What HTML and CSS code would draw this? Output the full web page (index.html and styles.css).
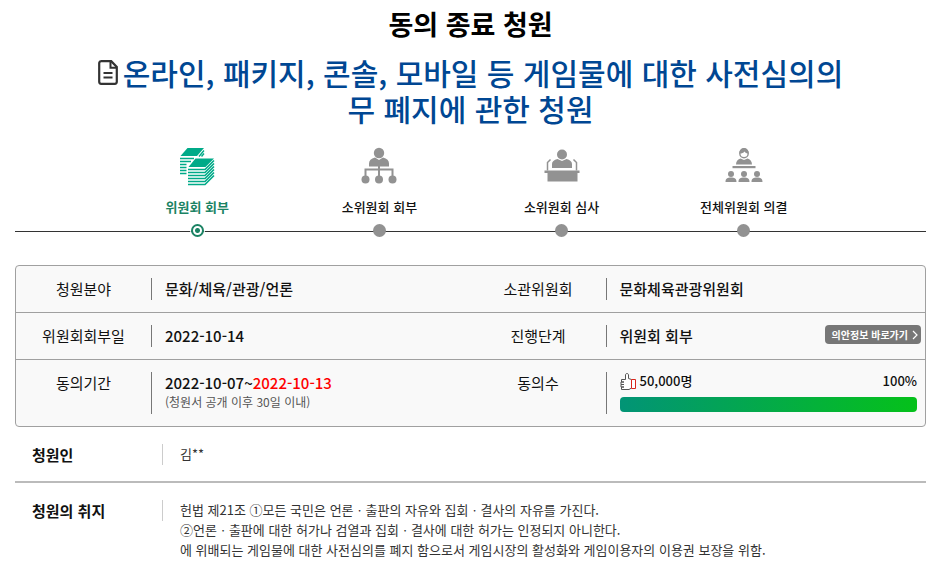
FILE: index.html
```html
<!DOCTYPE html>
<html lang="ko">
<head>
    <meta charset="UTF-8">
    <meta name="viewport" content="width=device-width, initial-scale=1.0">
    <title>동의 종료 청원</title>
    <link rel="stylesheet" href="styles.css">
</head>
<body>
    <main class="container">
        <h1>동의 종료 청원</h1>

        <h2 class="subject">
            <svg class="doc-icon" viewBox="0 0 20 25" aria-hidden="true">
                <path d="M3 1.2h10.2L18.8 7v14.8a2 2 0 0 1-2 2H3.2a2 2 0 0 1-2-2V3.2a2 2 0 0 1 2-2z" fill="#fff" stroke="#333" stroke-width="2.2"/>
                <path d="M12.5 1v6.8h6.3" fill="none" stroke="#333" stroke-width="2"/>
                <path d="M5.5 13h9M5.5 17.500h9" stroke="#333" stroke-width="2"/>
            </svg>온라인, 패키지, 콘솔, 모바일 등 게임물에 대한 사전심의의무 폐지에 관한 청원
        </h2>

        <!-- 진행 단계 -->
        <ol class="steps">
            <li class="active">
                <svg class="step-icon" viewBox="0 0 40 40" aria-hidden="true">
                    <path d="M10.5 2H27l-7 8H3.5z" fill="#0a8"/>
                    <path d="M3 12.5h14M3 15.5h11M3 18.5h6.5M3 21.5h6.5M3 24.5h6.5M3 27.5h6.5" stroke="#0a8" stroke-width="1.6"/>
                    <path d="M22 10.5l5-6M24.5 10.5l2.5-3" stroke="#0a8" stroke-width="1.4"/>
                    <path d="M18.5 12.5H37L28.5 21h-17z" fill="#0a8"/>
                    <path d="M11 23.5h17l9-9M11 26.5h17l9-9M11 29.5h17l9-9M11 32.5h17l9-9M11 35.5h17l9-9M11 38.5h17l9-9" fill="none" stroke="#0a8" stroke-width="1.6"/>
                </svg>
                <span class="step-name">위원회 회부</span>
                <span class="dot"></span>
            </li>
            <li>
                <svg class="step-icon" viewBox="0 0 40 40" fill="#929292" aria-hidden="true">
                    <circle cx="20" cy="7" r="5.2"/>
                    <path d="M10 20.5v-3c0-3 2-5 6-6l4 2.5 4-2.5c4 1 6 3 6 6v3z"/>
                    <path d="M20 19v11M6.5 30v-6.5h27V30" fill="none" stroke="#929292" stroke-width="2"/>
                    <circle cx="6.5" cy="33.5" r="4"/>
                    <circle cx="20" cy="33.5" r="4"/>
                    <circle cx="33.5" cy="33.5" r="4"/>
                </svg>
                <span class="step-name">소위원회 회부</span>
                <span class="dot"></span>
            </li>
            <li>
                <svg class="step-icon" viewBox="0 0 40 40" fill="#929292" aria-hidden="true">
                    <circle cx="20" cy="8.5" r="5"/>
                    <path d="M10 22v-4c0-2.5 2-4 5.5-5l4.5 2 4.500-2c3.500 1 5.500 2.500 5.500 5v4z"/>
                    <path d="M5.5 24.5v-8l3-3M34.5 24.5v-8l-3-3" fill="none" stroke="#929292" stroke-width="1.5"/>
                    <path d="M2.5 24.5h35V27h-2v8.500h-30V27h-3z"/>
                </svg>
                <span class="step-name">소위원회 심사</span>
                <span class="dot"></span>
            </li>
            <li>
                <svg class="step-icon" viewBox="0 0 40 40" fill="#929292" aria-hidden="true">
                    <circle cx="20" cy="7.5" r="4.2" fill="none" stroke="#929292" stroke-width="1.4"/>
                    <path d="M15.5 7.5c-1-7.5 10-7.5 9 0-2 0-3-.5-4-2-1 1.5-2.5 2-5 2z"/>
                    <path d="M12 18.5c0-3.5 2-5 4.5-6l3.5 1.5 3.5-1.5c2.5 1 4.5 2.5 4.5 6z"/>
                    <path d="M8.5 20h23v2.2h-23z"/>
                    <circle cx="7" cy="28" r="3"/>
                    <circle cx="20" cy="28" r="3"/>
                    <circle cx="33" cy="28" r="3"/>
                    <path d="M1.5 36c0-3.500 2-4.500 5.500-4.500s5.500 1 5.500 4.500zM14.500 36c0-3.500 2-4.500 5.500-4.500s5.500 1 5.500 4.500zM27.500 36c0-3.500 2-4.500 5.500-4.500s5.500 1 5.500 4.500z"/>
                </svg>
                <span class="step-name">전체위원회 의결</span>
                <span class="dot"></span>
            </li>
        </ol>

        <!-- 청원 정보 -->
        <table class="info">
            <tr>
                <th scope="row">청원분야</th>
                <td><div class="cell">문화/체육/관광/언론</div></td>
                <th scope="row">소관위원회</th>
                <td><div class="cell">문화체육관광위원회</div></td>
            </tr>
            <tr>
                <th scope="row">위원회회부일</th>
                <td><div class="cell">2022-10-14</div></td>
                <th scope="row">진행단계</th>
                <td>
                    <div class="cell stage">
                        위원회 회부
                        <a class="bill-link" href="#">의안정보 바로가기
                            <svg viewBox="0 0 6 10" aria-hidden="true"><path d="M1 1l4 4-4 4" fill="none" stroke="#fff" stroke-width="1.2"/></svg>
                        </a>
                    </div>
                </td>
            </tr>
            <tr>
                <th scope="row">동의기간</th>
                <td>
                    <div class="cell tall">
                        2022-10-07~<span class="end-date">2022-10-13</span>
                        <p class="period-note">(청원서 공개 이후 30일 이내)</p>
                    </div>
                </td>
                <th scope="row">동의수</th>
                <td>
                    <div class="cell tall">
                        <div class="count">
                            <svg viewBox="0 0 16 17" aria-hidden="true">
                                <path d="M11.5 6.5l-3-1V2c0-2-3-2-3 0v4.500h-4v2.500h2.500H1v2.500h3H1v2.500h3H1.500v2.500h7.500l2.500-1.500z" fill="#fff" stroke="#555" stroke-linejoin="round"/>
                                <path d="M11.5 6.5h4v9h-4z" fill="#fff" stroke="#d9261c"/>
                            </svg>
                            <span>50,000명</span>
                            <span class="percent">100%</span>
                        </div>
                        <div class="bar"><div class="bar-fill" style="width: 100%"></div></div>
                    </div>
                </td>
            </tr>
        </table>

        <!-- 청원 내용 -->
        <section class="detail">
            <h3>청원인</h3>
            <p>김**</p>
        </section>
        <section class="detail">
            <h3>청원의 취지</h3>
            <p>헌법 제21조 ①모든 국민은 언론ㆍ출판의 자유와 집회ㆍ결사의 자유를 가진다.<br>
            ②언론ㆍ출판에 대한 허가나 검열과 집회ㆍ결사에 대한 허가는 인정되지 아니한다.<br>
            에 위배되는 게임물에 대한 사전심의를 폐지 함으로서 게임시장의 활성화와 게임이용자의 이용권 보장을 위함.</p>
        </section>
    </main>
</body>
</html>
```
FILE: styles.css
```css
* {
    box-sizing: border-box;
}

body {
    margin: 0;
    font-family: "Noto Sans CJK KR", sans-serif;
    font-size: 15px;
    line-height: 21px;
    color: #111;
    background: #fff;
}

h1, h2, h3, p, ol {
    margin: 0;
    padding: 0;
}

.container {
    margin: 0 23px 0 15px;
}

h1 {
    padding-top: 6px;
    font-size: 27px;
    line-height: 36px;
    font-weight: 700;
    text-align: center;
    color: #000;
}

.subject {
    padding: 12px 8% 0;
    font-size: 30px;
    line-height: 36px;
    font-weight: 500;
    text-align: center;
    color: #004793;
}

.doc-icon {
    width: 20px;
    height: 25px;
    margin-right: 5px;
}

/* 진행 단계 */
.steps {
    display: flex;
    margin-top: 20px;
    padding: 0 10%;
    list-style: none;
    background: linear-gradient(#333, #333) left 0 bottom 5px / 100% 1px no-repeat;
}

.steps li {
    flex: 1;
    display: flex;
    flex-direction: column;
    align-items: center;
}

.step-icon {
    width: 40px;
    height: 40px;
}

.step-name {
    margin: 10px 0 7px;
    font-size: 13px;
    font-weight: 500;
}

.dot {
    width: 13px;
    height: 13px;
    border-radius: 50%;
    background: #929292;
}

.active .step-name {
    font-weight: 700;
    color: #1b8364;
}

.active .dot {
    border: 2px solid #1b8364;
    background: radial-gradient(#1b8364 0 2px, #fff 3px);
    box-shadow: 0 0 0 1px #fff;
}

/* 청원 정보 */
.info {
    width: 100%;
    margin-top: 28px;
    border: 1px solid #a0a0a0;
    border-radius: 4px;
    border-spacing: 0;
    table-layout: fixed;
    background: #f9f9f9;
}

.info th, .info td {
    padding: 12px 0;
    line-height: 22px;
    vertical-align: top;
}

.info tr + tr th, .info tr + tr td {
    border-top: 1px solid #a0a0a0;
}

.info th {
    width: 135px;
    font-weight: 400;
}

.info td {
    font-weight: 500;
}

.cell {
    padding-left: 13px;
    border-left: 1px solid #777;
}

.tall {
    height: 42px;
    padding-right: 8px;
}

.stage {
    display: flex;
    justify-content: space-between;
    padding-right: 4px;
}

.bill-link {
    display: flex;
    align-items: center;
    gap: 4px;
    height: 19px;
    padding: 0 3px 0 7px;
    border-radius: 4px;
    background: #777;
    color: #fff;
    font-size: 10px;
    font-weight: 700;
    text-decoration: none;
}

.bill-link svg {
    width: 6px;
    height: 10px;
}

.end-date {
    color: #f00;
}

.period-note {
    font-size: 12px;
    line-height: 16px;
    font-weight: 400;
    color: #555;
}

.count {
    display: flex;
    align-items: center;
    gap: 4px;
    font-size: 13px;
    line-height: 18px;
}

.count svg {
    width: 16px;
    height: 17px;
}

.percent {
    margin-left: auto;
}

.bar {
    height: 15px;
    margin-top: 7px;
    border-radius: 4px;
    overflow: hidden;
    background: #ddd;
}

.bar-fill {
    height: 100%;
    background: linear-gradient(to right, #029476, #05c11a);
}

/* 청원 내용 */
.detail {
    display: flex;
    align-items: flex-start;
    padding: 17px 0 16px;
}

.detail + .detail {
    border-top: 2px solid #bbb;
}

.detail h3 {
    flex: 0 0 148px;
    padding-left: 17px;
    font-size: 15px;
    font-weight: 700;
    border-right: 1px solid #ccc;
}

.detail p {
    padding-left: 17px;
    font-size: 13px;
    line-height: 20px;
    color: #333;
}
```
